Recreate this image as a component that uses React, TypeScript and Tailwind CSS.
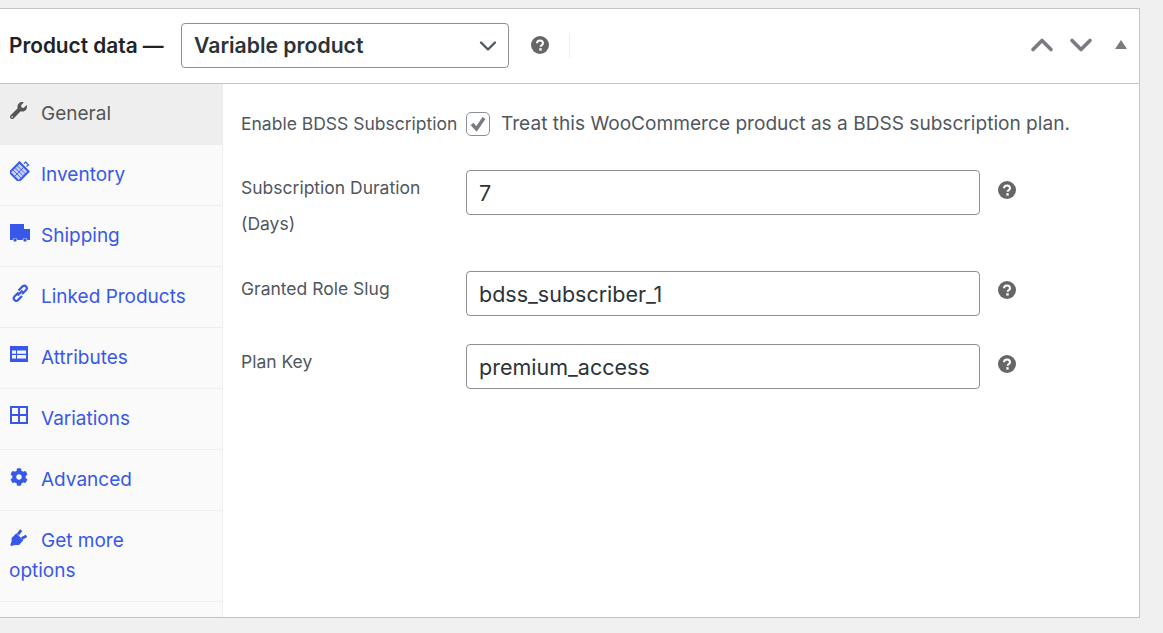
import React from 'react';
import { ChevronDown, ChevronUp } from 'lucide-react';
import { FaWrench, FaCog } from 'react-icons/fa';

const HelpTip = ({ className = '' }: { className?: string }) => (
  <svg viewBox="0 0 18 18" className={`w-[18px] h-[18px] shrink-0 ${className}`}>
    <circle cx="9" cy="9" r="9" fill="#666666" />
    <path d="M6 7.2a3 2.8 0 0 1 6 0c0 1.9-2.4 1.9-2.4 3.6" fill="none" stroke="#ffffff" strokeWidth="2" />
    <rect x="8.3" y="12.2" width="2.4" height="2.4" fill="#ffffff" />
  </svg>
);

const InventoryIcon = () => (
  <svg viewBox="0 0 20 20" className="block w-[20px] h-[20px] -mt-[6px]" fill="none" stroke="currentColor">
    <g transform="rotate(45 9.500 10.500)">
      <rect x="3" y="4" width="13" height="14" fill="#c5cef8" strokeWidth="2" />
      <path d="M3 8h13M3 11h13M3 14h13M9.500 4v14" strokeWidth="0.800" />
    </g>
    <path d="M14 3l1.500-2 3 3-2 1.500" strokeWidth="1.200" />
  </svg>
);

const TruckIcon = () => (
  <svg viewBox="0 0 20 18" className="block w-[20px] h-[18px] -mt-[4px]" fill="currentColor">
    <path d="M0 0h14v5h6v11h-2.500a2.600 2.600 0 0 0-5 0H7.500a2.600 2.600 0 0 0-5 0H0z" />
    <circle cx="5" cy="16" r="1.700" />
    <circle cx="15" cy="16" r="1.700" />
  </svg>
);

const LinkIcon = () => (
  <svg viewBox="0 0 18 18" className="block w-[18px] h-[18px] -mt-[5px] ml-[1px]" fill="none" stroke="currentColor" strokeWidth="2.200">
    <path d="M7.500 8.500l-4.300 4.300a2.500 2.500 0 0 0 3.500 3.500l4.300-4.300" />
    <path d="M6.500 11.500l5-5" />
    <path d="M7.500 6.500l4.300-4.300a2.500 2.500 0 0 1 3.500 3.500L11 10" />
  </svg>
);

const AttributesIcon = () => (
  <svg viewBox="0 0 18 16" className="block w-[18px] h-[16px] -mt-[4px]" fill="currentColor">
    <path d="M0 0h18v16H0z" />
    <path d="M2 4.500h4v3.300H2zM7 4.500h9v3.300H7zM2 9h4v3.500H2zM7 9h9v3.500H7z" fill="#f4f5fe" />
  </svg>
);

const GridIcon = () => (
  <svg viewBox="0 0 18 18" className="block w-[18px] h-[18px] -mt-[5px]" fill="none" stroke="currentColor" strokeWidth="2">
    <rect x="1" y="1" width="16" height="16" />
    <path d="M9 1v16M1 9h16" />
  </svg>
);

const PlugIcon = () => (
  <svg viewBox="0 0 16 16" className="block w-[17px] h-[17px] -mt-[4px]" fill="currentColor">
    <path d="M6 4l6.500 6.500L8.500 15H4.500L1.200 16 .300 15l1.200-3.500V8.500z" />
    <path d="M7.500 5L10.500 1M11 9l4.500-2.500" fill="none" stroke="currentColor" strokeWidth="2.600" />
  </svg>
);

const tabs = [
  { label: 'Inventory', icon: <InventoryIcon /> },
  { label: 'Shipping', icon: <TruckIcon /> },
  { label: 'Linked Products', icon: <LinkIcon /> },
  { label: 'Attributes', icon: <AttributesIcon /> },
  { label: 'Variations', icon: <GridIcon /> },
  { label: 'Advanced', icon: <FaCog className="block w-[18px] h-[18px] -mt-[4px]" /> },
  { label: 'Get more options', icon: <PlugIcon /> },
];

const fieldClass =
  'w-[514px] h-[45px] shrink-0 px-[12px] border border-[#8c8f94] rounded-[4px] text-[21.500px] text-[#2c3338] bg-white outline-none';

export default function App() {
  return (
    <div className="min-h-[633px] bg-[#f0f0f1] pt-2 overflow-hidden font-['Inter',sans-serif] text-[19px] text-[#50575e]">
      <div className="w-[1140px] h-[610px] flex flex-col bg-white border-t border-r border-b border-[#c3c4c7]">
        {/* Header */}
        <div className="h-[75px] flex items-center border-b border-[#c3c4c7] pl-[9px] pr-[12px] pb-[1px]">
          <span className="w-[172px] shrink-0 text-[20.800px] font-semibold text-[#1d2327]">Product data —</span>
          <button className="w-[328px] h-[45px] flex items-center justify-between pl-[12px] pr-[6px] border border-[#8c8f94] rounded-[4px] text-[21.200px] font-semibold text-[#2c3338]">
            Variable product
            <ChevronDown className="w-[28px] h-[28px] text-[#50575e]" />
          </button>
          <HelpTip className="ml-[22px] mb-[2px]" />
          <div className="w-px h-[25px] ml-[20px] bg-[#eeeeee]" />
          <div className="ml-auto flex items-center text-[#787c82]">
            <ChevronUp className="w-[36px] h-[36px] mb-[1px]" strokeWidth={2.4} />
            <ChevronDown className="w-[36px] h-[36px] ml-[3px] -mt-[1px]" strokeWidth={2.4} />
            <div className="ml-[16px] mb-[2px] w-0 h-0 border-x-[6px] border-x-transparent border-b-[9px] border-b-[#787c82]" />
          </div>
        </div>

        <div className="flex-1 flex">
          {/* Tabs */}
          <ul className="w-[223px] shrink-0 bg-[#fafafa] border-r border-[#eeeeee]">
            <li className="h-[61px] bg-[#eeeeee] pl-[9px] py-[15px] leading-[30px] text-[#555555]">
              <span className="inline-block w-[32px] pl-[1px] h-[16px] align-[-2px]">
                <FaWrench className="block w-[17px] h-[17px] -mt-[4px]" />
              </span>
              General
            </li>
            {tabs.map((tab) => (
              <li key={tab.label} className="border-b border-[#eeeeee] pl-[9px] pr-[30px] py-[15px] leading-[30px] text-[#3858e9]">
                <span className="inline-block w-[32px] pl-[1px] h-[16px] align-[-2px]">{tab.icon}</span>
                {tab.label}
              </li>
            ))}
          </ul>

          {/* General panel */}
          <div className="flex-1 pl-[18px] pt-[26px] text-[17.500px] leading-[36px]">
            <div className="flex items-center h-[28px]">
              <label className="w-[225px] shrink-0 whitespace-nowrap">Enable BDSS Subscription</label>
              <span className="w-[24px] h-[24px] flex items-center justify-center border border-[#8c8f94] rounded-[5px] bg-white">
                <svg viewBox="0 0 20 20" className="w-[20px] h-[20px]">
                  <path d="M4 10l4.500 5L16 4" fill="none" stroke="#787c82" strokeWidth="3.500" />
                </svg>
              </span>
              <span className="ml-[11px] mb-[2px] text-[19.100px] whitespace-nowrap">Treat this WooCommerce product as a BDSS subscription plan.</span>
            </div>

            <div className="flex items-start mt-[32px]">
              <label className="w-[225px] shrink-0">Subscription Duration<br />(Days)</label>
              <input readOnly value="7" className={fieldClass} />
              <HelpTip className="ml-[18px] mt-[11px]" />
            </div>

            <div className="flex items-start mt-[29px]">
              <label className="w-[225px] shrink-0">Granted Role Slug</label>
              <input readOnly value="bdss_subscriber_1" className={fieldClass} />
              <HelpTip className="ml-[18px] mt-[10px]" />
            </div>

            <div className="flex items-start mt-[28px]">
              <label className="w-[225px] shrink-0">Plan Key</label>
              <input readOnly value="premium_access" className={fieldClass} />
              <HelpTip className="ml-[18px] mt-[11px]" />
            </div>
          </div>
        </div>
      </div>
    </div>
  );
}
